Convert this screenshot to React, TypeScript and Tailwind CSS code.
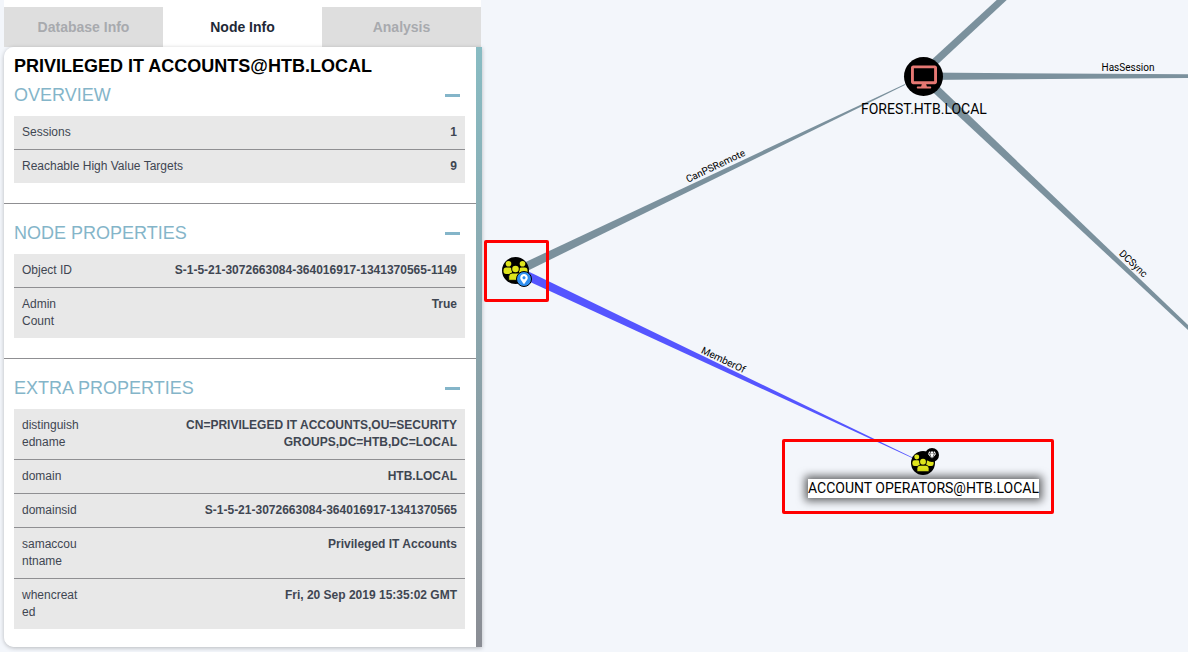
import { FaDesktop, FaGem, FaMapMarkerAlt } from 'react-icons/fa';

const overview = [
  ['Sessions', '1'],
  ['Reachable High Value Targets', '9'],
];

const nodeProps = [
  ['Object ID', 'S-1-5-21-3072663084-364016917-1341370565-1149'],
  ['Admin Count', 'True'],
];

const extraProps = [
  ['distinguishedname', 'CN=PRIVILEGED IT ACCOUNTS,OU=SECURITY GROUPS,DC=HTB,DC=LOCAL'],
  ['domain', 'HTB.LOCAL'],
  ['domainsid', 'S-1-5-21-3072663084-364016917-1341370565'],
  ['samaccountname', 'Privileged IT Accounts'],
  ['whencreated', 'Fri, 20 Sep 2019 15:35:02 GMT'],
];

function Tab({ label, active }: { label: string; active?: boolean }) {
  return (
    <div
      className={
        active
          ? 'flex-1 h-10 flex items-center justify-center bg-white text-sm font-bold text-[#1f2937]'
          : 'flex-1 h-10 flex items-center justify-center bg-[#dedede] text-sm font-bold text-[#a8aaae]'
      }
    >
      {label}
    </div>
  );
}

function Heading({ title }: { title: string }) {
  return (
    <div className="flex items-center justify-between h-[28px]">
      <span className="text-lg font-normal text-[#84b5c9]">{title}</span>
      <span className="w-[15px] h-[3px] bg-[#84b5c9] mr-[5px]" />
    </div>
  );
}

function Rows({ rows, fixedKey }: { rows: string[][]; fixedKey?: boolean }) {
  return (
    <div className="text-xs leading-[17px] text-[#3f4652] bg-[#e8e8e8]">
      {rows.map(([k, v], i) => (
        <div
          key={k}
          className={
            i < rows.length - 1
              ? 'flex justify-between px-2 pt-2 pb-2 border-b border-[#8f8f92]'
              : 'flex justify-between px-2 pt-2 pb-2'
          }
        >
          <div className={fixedKey ? 'w-[58px] shrink-0 break-words' : ''}>{k}</div>
          <div className="font-bold text-right">{v}</div>
        </div>
      ))}
    </div>
  );
}

function NodePanel() {
  return (
    <div className="w-[478px] h-[652px] ml-1 shrink-0 flex flex-col font-['Liberation_Sans',sans-serif]">
      <div className="h-[7px] bg-white mr-px" />
      <div className="flex pr-px">
        <Tab label="Database Info" />
        <Tab label="Node Info" active />
        <Tab label="Analysis" />
      </div>
      <div className="flex h-[600px] shadow-[0_1px_4px_rgba(0,0,0,0.25)] rounded-bl-[10px] rounded-tl-[10px]">
        <div className="flex-1 min-w-0 bg-white rounded-bl-[10px] rounded-tl-[10px]">
          <div className="pl-[10px] pr-[11px] pt-[8px] pb-[20px] border-b border-[#8f8f92]">
            <div className="text-lg leading-[22px] font-bold text-black mb-[4px]">PRIVILEGED IT ACCOUNTS@HTB.LOCAL</div>
            <Heading title="OVERVIEW" />
            <div className="mt-[7px]">
              <Rows rows={overview} />
            </div>
          </div>
          <div className="pl-[10px] pr-[11px] pt-[15px] pb-[20px] border-b border-[#8f8f92]">
            <Heading title="NODE PROPERTIES" />
            <div className="mt-[7px]">
              <Rows rows={nodeProps} fixedKey />
            </div>
          </div>
          <div className="pl-[10px] pr-[11px] pt-[15px]">
            <Heading title="EXTRA PROPERTIES" />
            <div className="mt-[7px]">
              <Rows rows={extraProps} fixedKey />
            </div>
          </div>
        </div>
        <div className="w-[6px] bg-gradient-to-b from-[#88bcc3] to-[#8a8d94]" />
      </div>
    </div>
  );
}

// black disc with three yellow people, center one in front
function GroupIcon({ size }: { size: number }) {
  const yellow = '#dfe51c';
  return (
    <svg width={size} height={size} viewBox="-13.5 -13.5 27 27" className="block">
      <circle r="13.5" fill="#000" />
      <circle cx="-7" cy="-6.8" r="2.8" fill={yellow} />
      <circle cx="7" cy="-6.8" r="2.8" fill={yellow} />
      <rect x="-12" y="-3" width="8.6" height="6.4" rx="2.6" fill={yellow} />
      <rect x="3.4" y="-3" width="8.6" height="6.4" rx="2.6" fill={yellow} />
      <circle cy="-1.4" r="4.3" fill="#000" />
      <circle cy="-1.4" r="3.3" fill={yellow} />
      <path d="M-6.8 9.8 V6 a3.4 3.4 0 0 1 3.4 -3.4 H3.4 a3.4 3.4 0 0 1 3.4 3.4 V9.8 Z" fill={yellow} stroke="#000" strokeWidth="0.9" />
    </svg>
  );
}

function Graph() {
  return (
    <div className="relative flex-1 h-[652px] font-['Roboto',sans-serif]">
      <svg className="absolute inset-0" width="706" height="652" viewBox="482 0 706 652">
        <polygon points="996.7,0 1006.7,0 925,76 914,76" fill="#7b919d" />
        <polygon points="923,72.5 1188,74.3 1188,78 923,80" fill="#7b919d" />
        <polygon points="923,71 1188,325 1188,330 923,83" fill="#7b919d" />
        <polygon points="515,267 515,277 905,85 905,84" fill="#7b919d" />
        <polygon points="515,265 515,275 923,463 923,462.5" fill="#5555ff" />
        <text x="1128" y="71" fontSize="10" textAnchor="middle" fill="#000">HasSession</text>
        <text fontSize="10" textAnchor="middle" fill="#000" transform="translate(717,169) rotate(-25.4)">CanPSRemote</text>
        <text fontSize="10" textAnchor="middle" fill="#000" transform="translate(1131,266) rotate(43.5)">DCSync</text>
        <text fontSize="10" textAnchor="middle" fill="#000" transform="translate(722,363) rotate(25.4)">MemberOf</text>
      </svg>

      {/* FOREST computer node */}
      <div className="absolute left-[422px] top-[57px] w-[39px] h-[39px] rounded-full bg-black flex items-center justify-center">
        <FaDesktop size={26} color="#e67873" />
      </div>
      <div className="absolute left-[379px] top-[100px] text-sm leading-[18px] text-black whitespace-nowrap">FOREST.HTB.LOCAL</div>

      {/* Privileged IT Accounts */}
      <div className="absolute left-[20px] top-[257px]">
        <GroupIcon size={27} />
      </div>
      <div className="absolute left-[34px] top-[271px] w-[16px] h-[16px] rounded-full bg-[#2f8ff0] border border-black flex items-center justify-center">
        <FaMapMarkerAlt size={10} color="#ffffff" />
      </div>

      {/* Account Operators */}
      <div className="absolute left-[429px] top-[451px]">
        <GroupIcon size={24} />
      </div>
      <div className="absolute left-[443px] top-[448px] w-[14px] h-[14px] rounded-full bg-black flex items-center justify-center">
        <FaGem size={8} color="#ffffff" />
      </div>
      <div className="absolute left-[326px] top-[479px] h-[19px] bg-white text-sm leading-[19px] text-black whitespace-nowrap shadow-[0_0_8px_3px_rgba(0,0,0,0.6)]">
        ACCOUNT OPERATORS@HTB.LOCAL
      </div>

      {/* red callouts */}
      <div className="absolute left-[2px] top-[240px] w-[65px] h-[62px] border-[3px] border-[#ff0000] rounded-[2px]" />
      <div className="absolute left-[300px] top-[439px] w-[272px] h-[75px] border-[3px] border-[#ff0000] rounded-[2px]" />
    </div>
  );
}

export default function App() {
  return (
    <div className="flex w-[1188px] h-[652px] overflow-hidden bg-[#f3f6fb]">
      <NodePanel />
      <Graph />
    </div>
  );
}
